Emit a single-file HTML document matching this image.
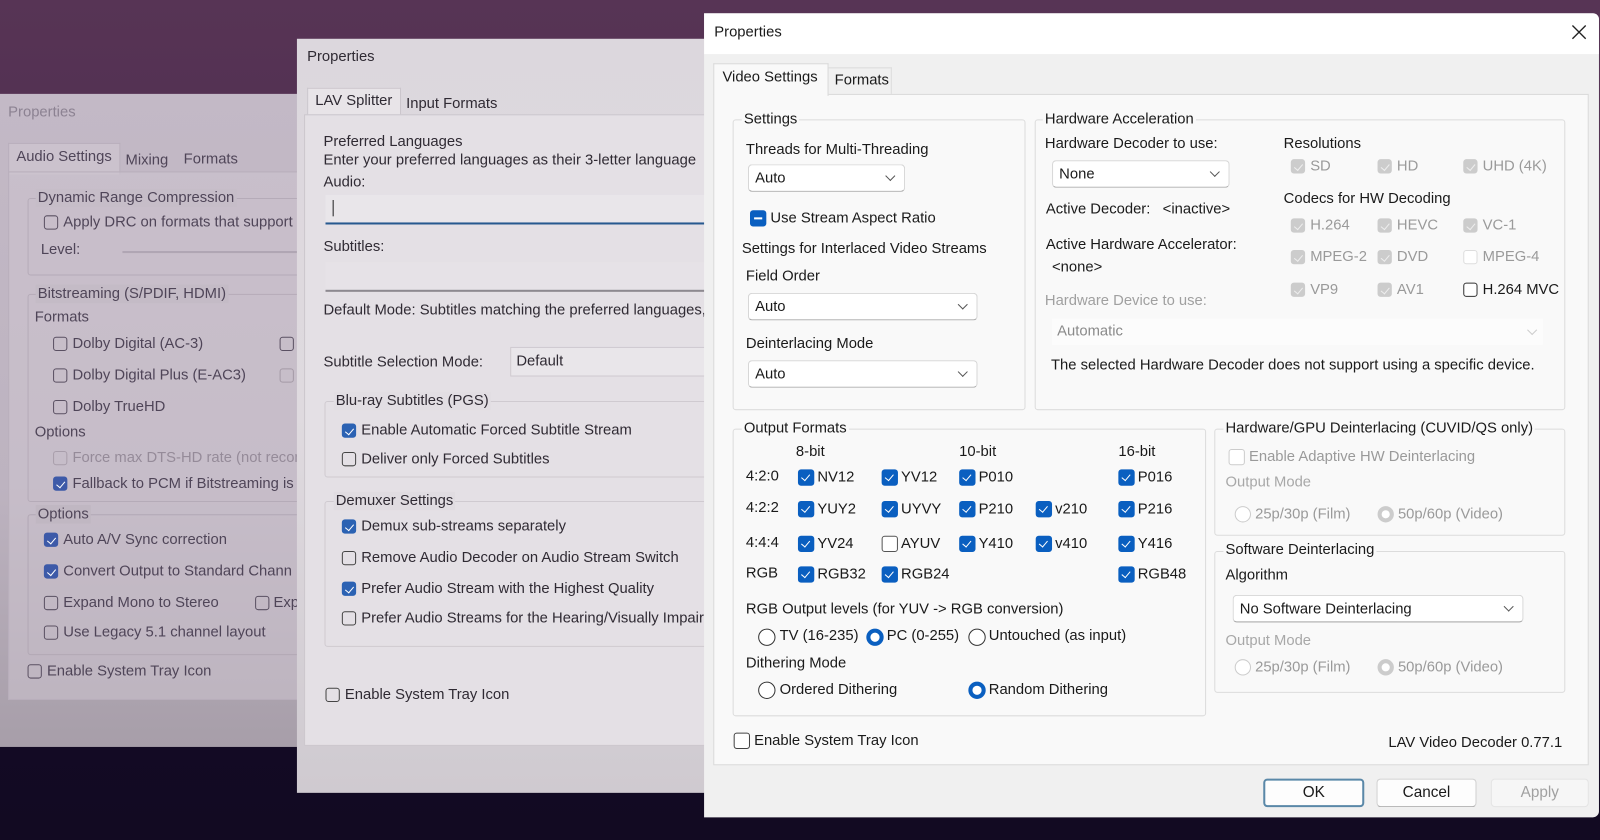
<!DOCTYPE html>
<html><head><meta charset="utf-8">
<style>
html,body{margin:0;padding:0;width:1600px;height:840px;overflow:hidden}
body{background:linear-gradient(180deg,#573455 0%,#4c2c4e 40%,#2a1838 70%,#130a24 88%,#120a22 100%);font-family:"Liberation Sans",sans-serif}
#s{position:absolute;left:0;top:0;width:1568px;height:823px;transform:scale(1.0204);transform-origin:0 0}
.d{position:absolute;overflow:hidden}
.t{position:absolute;white-space:nowrap;line-height:18px;font-size:14.5px}
.b{position:absolute;border:1px solid #dcdcdc;border-radius:3px}
.cb{position:absolute;width:14px;height:14px;border:1px solid #333;border-radius:3px;box-sizing:border-box;background:#fff}
.cb.on{background:#0a5fc0;border-color:#0a5fc0}
.cb.on::after{content:"";position:absolute;left:3.5px;top:1.5px;width:4px;height:7px;border:solid #fff;border-width:0 1.6px 1.6px 0;transform:rotate(40deg)}
.cb.dis{background:#ccc;border-color:#ccc}
.cb.dis::after{content:"";position:absolute;left:3.5px;top:1.5px;width:4px;height:7px;border:solid #eee;border-width:0 1.5px 1.5px 0;transform:rotate(40deg)}
.cb.dw{background:#fff;border-color:#ddd}
.rd{position:absolute;width:15px;height:15px;border:1px solid #333;border-radius:50%;box-sizing:border-box;background:#fff}
.rd.on{border:4.5px solid #0a5fc0}
.rd.dg{border-color:#ccc}
.rd.dgo{border:4.5px solid #ccc;background:#fff}
.sel{position:absolute;background:#fff;border:1px solid #d6d6d6;border-bottom-color:#a8a8a8;border-radius:4px;box-sizing:border-box}
.sel span{position:absolute;left:6px;top:4px;font-size:14.5px;line-height:18px}
.sel i{position:absolute;right:10px;top:7px;width:6px;height:6px;border:solid #555;border-width:0 1.3px 1.3px 0;transform:rotate(45deg)}
.g{color:#9a9a9a}
</style></head><body><div id="s">

<!-- LEFT DIALOG -->
<div class="d" style="left:0;top:92px;width:292px;height:640px;background:linear-gradient(180deg,#c3b9c6 0%,#bdb3c0 60%,#a79ea9 100%);color:#4f4558">
 <div class="t" style="left:8px;top:9px;color:#8c8292">Properties</div>
 <div style="position:absolute;left:8px;top:48px;width:108px;height:30px;background:#cbc2cd;border:1px solid #b8aebb;border-bottom:none"></div>
 <div class="t" style="left:16px;top:53px">Audio Settings</div>
 <div class="t" style="left:123px;top:56px">Mixing</div>
 <div class="t" style="left:180px;top:55px">Formats</div>
 <div style="position:absolute;left:8px;top:76px;width:290px;height:516px;background:rgba(205,196,207,.55);border:1px solid #b8aebb"></div>
 <div class="b" style="left:27px;top:102px;width:280px;height:74px;border-color:#b5abb8"></div>
 <div class="t" style="left:35px;top:93px;background:#c6bdc8;padding:0 2px">Dynamic Range Compression</div>
 <i class="cb" style="left:43px;top:119px;background:transparent;border-color:#5a5062"></i><div class="t" style="left:62px;top:117px">Apply DRC on formats that support</div>
 <div class="t" style="left:40px;top:144px">Level:</div>
 <div style="position:absolute;left:120px;top:154px;width:180px;height:2px;background:#b0a6b3"></div>
 <div class="b" style="left:27px;top:196px;width:280px;height:202px;border-color:#b5abb8"></div>
 <div class="t" style="left:35px;top:187px;background:#c4bbc6;padding:0 2px">Bitstreaming (S/PDIF, HDMI)</div>
 <div class="t" style="left:34px;top:210px">Formats</div>
 <i class="cb" style="left:52px;top:238px;background:transparent;border-color:#5a5062"></i><div class="t" style="left:71px;top:236px">Dolby Digital (AC-3)</div>
 <i class="cb" style="left:274px;top:238px;background:transparent;border-color:#5a5062"></i>
 <i class="cb" style="left:52px;top:269px;background:transparent;border-color:#5a5062"></i><div class="t" style="left:71px;top:267px">Dolby Digital Plus (E-AC3)</div>
 <i class="cb" style="left:274px;top:269px;background:transparent;border-color:#a49aa6"></i>
 <i class="cb" style="left:52px;top:300px;background:transparent;border-color:#5a5062"></i><div class="t" style="left:71px;top:298px">Dolby TrueHD</div>
 <div class="t" style="left:34px;top:323px">Options</div>
 <i class="cb" style="left:52px;top:350px;background:transparent;border-color:#a89eab"></i><div class="t" style="left:71px;top:348px;color:#958b99">Force max DTS-HD rate (not recom</div>
 <i class="cb on" style="left:52px;top:375px;background:#3d5aa8;border-color:#3d5aa8"></i><div class="t" style="left:71px;top:373px">Fallback to PCM if Bitstreaming is r</div>
 <div class="b" style="left:27px;top:412px;width:280px;height:136px;border-color:#b2a8b5"></div>
 <div class="t" style="left:35px;top:403px;background:#c0b7c2;padding:0 2px">Options</div>
 <i class="cb on" style="left:43px;top:430px;background:#3d5aa8;border-color:#3d5aa8"></i><div class="t" style="left:62px;top:428px">Auto A/V Sync correction</div>
 <i class="cb on" style="left:43px;top:461px;background:#3d5aa8;border-color:#3d5aa8"></i><div class="t" style="left:62px;top:459px">Convert Output to Standard Chann</div>
 <i class="cb" style="left:43px;top:492px;background:transparent;border-color:#5a5062"></i><div class="t" style="left:62px;top:490px">Expand Mono to Stereo</div>
 <i class="cb" style="left:250px;top:492px;background:transparent;border-color:#5a5062"></i><div class="t" style="left:268px;top:490px">Exp</div>
 <i class="cb" style="left:43px;top:521px;background:transparent;border-color:#5a5062"></i><div class="t" style="left:62px;top:519px">Use Legacy 5.1 channel layout</div>
 <i class="cb" style="left:27px;top:559px;background:transparent;border-color:#5a5062"></i><div class="t" style="left:46px;top:557px">Enable System Tray Icon</div>
</div>

<!-- MIDDLE DIALOG -->
<div class="d" style="left:291px;top:38px;width:400px;height:739px;background:linear-gradient(180deg,#dcd7dd 0%,#dfdadf 50%,#cfcad0 100%);color:#2f2a33">
 <div class="t" style="left:10px;top:9px">Properties</div>
 <div style="position:absolute;left:10px;top:48px;width:90px;height:28px;background:#e8e4e8;border:1px solid #cbc6cc;border-bottom:none"></div>
 <div class="t" style="left:18px;top:52px">LAV Splitter</div>
 <div class="t" style="left:107px;top:55px">Input Formats</div>
 <div style="position:absolute;left:7px;top:74px;width:400px;height:617px;background:#e4e0e5;border:1px solid #cbc6cc"></div>
 <div class="t" style="left:26px;top:92px">Preferred Languages</div>
 <div class="t" style="left:26px;top:110px">Enter your preferred languages as their 3-letter language</div>
 <div class="t" style="left:26px;top:132px">Audio:</div>
 <div style="position:absolute;left:28px;top:153px;width:380px;height:27px;background:#e9e6ea;border-bottom:2px solid #27598f"></div>
 <div style="position:absolute;left:35px;top:158px;width:1px;height:16px;background:#222"></div>
 <div class="t" style="left:26px;top:195px">Subtitles:</div>
 <div style="position:absolute;left:28px;top:219px;width:380px;height:27px;background:#e6e2e7;border-bottom:2px solid #8d8990"></div>
 <div class="t" style="left:26px;top:257px">Default Mode: Subtitles matching the preferred languages,</div>
 <div class="t" style="left:26px;top:308px">Subtitle Selection Mode:</div>
 <div style="position:absolute;left:209px;top:302px;width:200px;height:27px;background:#e9e6ea;border:1px solid #cfcad0"></div>
 <div class="t" style="left:215px;top:307px">Default</div>
 <div class="b" style="left:27px;top:355px;width:380px;height:73px;border-color:#cfcad0"></div>
 <div class="t" style="left:36px;top:346px;background:#e2dee3;padding:0 2px">Blu-ray Subtitles (PGS)</div>
 <i class="cb on" style="left:44px;top:377px;background:#2b62b3;border-color:#2b62b3"></i><div class="t" style="left:63px;top:375px">Enable Automatic Forced Subtitle Stream</div>
 <i class="cb" style="left:44px;top:405px;background:transparent;border-color:#444"></i><div class="t" style="left:63px;top:403px">Deliver only Forced Subtitles</div>
 <div class="b" style="left:27px;top:453px;width:380px;height:141px;border-color:#cfcad0"></div>
 <div class="t" style="left:36px;top:444px;background:#e0dce1;padding:0 2px">Demuxer Settings</div>
 <i class="cb on" style="left:44px;top:471px;background:#2b62b3;border-color:#2b62b3"></i><div class="t" style="left:63px;top:469px">Demux sub-streams separately</div>
 <i class="cb" style="left:44px;top:502px;background:transparent;border-color:#444"></i><div class="t" style="left:63px;top:500px">Remove Audio Decoder on Audio Stream Switch</div>
 <i class="cb on" style="left:44px;top:532px;background:#2b62b3;border-color:#2b62b3"></i><div class="t" style="left:63px;top:530px">Prefer Audio Stream with the Highest Quality</div>
 <i class="cb" style="left:44px;top:561px;background:transparent;border-color:#444"></i><div class="t" style="left:63px;top:559px">Prefer Audio Streams for the Hearing/Visually Impaired</div>
 <i class="cb" style="left:28px;top:636px;background:transparent;border-color:#444"></i><div class="t" style="left:47px;top:634px">Enable System Tray Icon</div>
</div>

<!-- RIGHT DIALOG -->
<div class="d" style="left:690px;top:13px;width:877px;height:788px;background:#f0f0f0;color:#1a1a1a;border-radius:0 6px 6px 0">
 <div style="position:absolute;left:0;top:0;width:877px;height:40px;background:#fff"></div>
 <div class="t" style="left:10px;top:10px">Properties</div>
 <svg style="position:absolute;left:850px;top:11px" width="15" height="15"><path d="M1 1L14 14M14 1L1 14" stroke="#222" stroke-width="1.3"/></svg>
 <div style="position:absolute;left:9px;top:49px;width:111px;height:31px;background:#f9f9f9;border:1px solid #d9d9d9;border-bottom:none;z-index:2"></div>
 <div class="t" style="left:18px;top:54px;z-index:3">Video Settings</div>
 <div style="position:absolute;left:121px;top:53px;width:61px;height:26px;border:1px solid #dcdcdc;border-bottom:none;background:#f0f0f0"></div>
 <div class="t" style="left:128px;top:57px">Formats</div>
 <div style="position:absolute;left:9px;top:79px;width:858px;height:658px;background:#f9f9f9;border:1px solid #d9d9d9;box-sizing:border-box"></div>

 <div class="b" style="left:28px;top:104px;width:285px;height:283px"></div>
 <div class="t" style="left:37px;top:95px;background:#f9f9f9;padding:0 2px">Settings</div>
 <div class="t" style="left:41px;top:125px">Threads for Multi-Threading</div>
 <div class="sel" style="left:43px;top:148px;width:154px;height:27px"><span>Auto</span><i></i></div>
 <i class="cb" style="left:45px;top:193px;width:16px;height:16px;background:#0a5fc0;border-color:#0a5fc0"></i>
 <div style="position:absolute;left:49px;top:200px;width:8px;height:2px;background:#fff"></div>
 <div class="t" style="left:65px;top:192px">Use Stream Aspect Ratio</div>
 <div class="t" style="left:37px;top:222px">Settings for Interlaced Video Streams</div>
 <div class="t" style="left:41px;top:249px">Field Order</div>
 <div class="sel" style="left:43px;top:274px;width:225px;height:27px"><span>Auto</span><i></i></div>
 <div class="t" style="left:41px;top:315px">Deinterlacing Mode</div>
 <div class="sel" style="left:43px;top:340px;width:225px;height:27px"><span>Auto</span><i></i></div>

 <div class="b" style="left:324px;top:104px;width:518px;height:283px"></div>
 <div class="t" style="left:332px;top:95px;background:#f9f9f9;padding:0 2px">Hardware Acceleration</div>
 <div class="t" style="left:334px;top:119px">Hardware Decoder to use:</div>
 <div class="sel" style="left:341px;top:144px;width:174px;height:27px"><span>None</span><i></i></div>
 <div class="t" style="left:335px;top:183px">Active Decoder:&nbsp;&nbsp; &lt;inactive&gt;</div>
 <div class="t" style="left:335px;top:218px">Active Hardware Accelerator:</div>
 <div class="t" style="left:341px;top:240px">&lt;none&gt;</div>
 <div class="t g" style="left:334px;top:273px;color:#a0a0a0">Hardware Device to use:</div>
 <div style="position:absolute;left:341px;top:299px;width:481px;height:26px;background:#fcfcfc"></div>
 <div class="t" style="left:346px;top:303px;color:#8a8a8a">Automatic</div>
 <div style="position:absolute;left:808px;top:307px;width:6px;height:6px;border:solid #ccc;border-width:0 1.3px 1.3px 0;transform:rotate(45deg)"></div>
 <div class="t" style="left:340px;top:336px">The selected Hardware Decoder does not support using a specific device.</div>
 <div class="t" style="left:568px;top:119px">Resolutions</div>
 <i class="cb dis" style="left:575px;top:143px"></i><div class="t g" style="left:594px;top:141px">SD</div>
 <i class="cb dis" style="left:660px;top:143px"></i><div class="t g" style="left:679px;top:141px">HD</div>
 <i class="cb dis" style="left:744px;top:143px"></i><div class="t g" style="left:763px;top:141px">UHD (4K)</div>
 <div class="t" style="left:568px;top:173px">Codecs for HW Decoding</div>
 <i class="cb dis" style="left:575px;top:201px"></i><div class="t g" style="left:594px;top:199px">H.264</div>
 <i class="cb dis" style="left:660px;top:201px"></i><div class="t g" style="left:679px;top:199px">HEVC</div>
 <i class="cb dis" style="left:744px;top:201px"></i><div class="t g" style="left:763px;top:199px">VC-1</div>
 <i class="cb dis" style="left:575px;top:232px"></i><div class="t g" style="left:594px;top:230px">MPEG-2</div>
 <i class="cb dis" style="left:660px;top:232px"></i><div class="t g" style="left:679px;top:230px">DVD</div>
 <i class="cb dw" style="left:744px;top:232px"></i><div class="t g" style="left:763px;top:230px">MPEG-4</div>
 <i class="cb dis" style="left:575px;top:264px"></i><div class="t g" style="left:594px;top:262px">VP9</div>
 <i class="cb dis" style="left:660px;top:264px"></i><div class="t g" style="left:679px;top:262px">AV1</div>
 <i class="cb" style="left:744px;top:264px"></i><div class="t" style="left:763px;top:262px">H.264 MVC</div>

 <div class="b" style="left:28px;top:407px;width:462px;height:280px"></div>
 <div class="t" style="left:37px;top:398px;background:#f9f9f9;padding:0 2px">Output Formats</div>
 <div class="t" style="left:90px;top:421px">8-bit</div>
 <div class="t" style="left:250px;top:421px">10-bit</div>
 <div class="t" style="left:406px;top:421px">16-bit</div>
 <div class="t" style="left:41px;top:445px">4:2:0</div>
 <div class="t" style="left:41px;top:476px">4:2:2</div>
 <div class="t" style="left:41px;top:510px">4:4:4</div>
 <div class="t" style="left:41px;top:540px">RGB</div>
 <i class="cb on" style="left:92px;top:447px;width:16px;height:16px"></i><div class="t" style="left:111px;top:446px">NV12</div>
 <i class="cb on" style="left:174px;top:447px;width:16px;height:16px"></i><div class="t" style="left:193px;top:446px">YV12</div>
 <i class="cb on" style="left:250px;top:447px;width:16px;height:16px"></i><div class="t" style="left:269px;top:446px">P010</div>
 <i class="cb on" style="left:406px;top:447px;width:16px;height:16px"></i><div class="t" style="left:425px;top:446px">P016</div>
 <i class="cb on" style="left:92px;top:478px;width:16px;height:16px"></i><div class="t" style="left:111px;top:477px">YUY2</div>
 <i class="cb on" style="left:174px;top:478px;width:16px;height:16px"></i><div class="t" style="left:193px;top:477px">UYVY</div>
 <i class="cb on" style="left:250px;top:478px;width:16px;height:16px"></i><div class="t" style="left:269px;top:477px">P210</div>
 <i class="cb on" style="left:325px;top:478px;width:16px;height:16px"></i><div class="t" style="left:344px;top:477px">v210</div>
 <i class="cb on" style="left:406px;top:478px;width:16px;height:16px"></i><div class="t" style="left:425px;top:477px">P216</div>
 <i class="cb on" style="left:92px;top:512px;width:16px;height:16px"></i><div class="t" style="left:111px;top:511px">YV24</div>
 <i class="cb" style="left:174px;top:512px;width:16px;height:16px;border-color:#555"></i><div class="t" style="left:193px;top:511px">AYUV</div>
 <i class="cb on" style="left:250px;top:512px;width:16px;height:16px"></i><div class="t" style="left:269px;top:511px">Y410</div>
 <i class="cb on" style="left:325px;top:512px;width:16px;height:16px"></i><div class="t" style="left:344px;top:511px">v410</div>
 <i class="cb on" style="left:406px;top:512px;width:16px;height:16px"></i><div class="t" style="left:425px;top:511px">Y416</div>
 <i class="cb on" style="left:92px;top:542px;width:16px;height:16px"></i><div class="t" style="left:111px;top:541px">RGB32</div>
 <i class="cb on" style="left:174px;top:542px;width:16px;height:16px"></i><div class="t" style="left:193px;top:541px">RGB24</div>
 <i class="cb on" style="left:406px;top:542px;width:16px;height:16px"></i><div class="t" style="left:425px;top:541px">RGB48</div>
 <div class="t" style="left:41px;top:575px">RGB Output levels (for YUV -&gt; RGB conversion)</div>
 <i class="rd" style="left:53px;top:603px;width:17px;height:17px"></i><div class="t" style="left:74px;top:601px">TV (16-235)</div>
 <i class="rd on" style="left:159px;top:603px;width:17px;height:17px"></i><div class="t" style="left:179px;top:601px">PC (0-255)</div>
 <i class="rd" style="left:259px;top:603px;width:17px;height:17px"></i><div class="t" style="left:279px;top:601px">Untouched (as input)</div>
 <div class="t" style="left:41px;top:628px">Dithering Mode</div>
 <i class="rd" style="left:53px;top:655px;width:17px;height:17px"></i><div class="t" style="left:74px;top:654px">Ordered Dithering</div>
 <i class="rd on" style="left:259px;top:655px;width:17px;height:17px"></i><div class="t" style="left:279px;top:654px">Random Dithering</div>

 <div class="b" style="left:500px;top:407px;width:342px;height:103px"></div>
 <div class="t" style="left:509px;top:398px;background:#f9f9f9;padding:0 2px">Hardware/GPU Deinterlacing (CUVID/QS only)</div>
 <i class="cb" style="left:514px;top:427px;width:16px;height:16px;border-color:#ccc"></i><div class="t g" style="left:534px;top:426px">Enable Adaptive HW Deinterlacing</div>
 <div class="t" style="left:511px;top:451px;color:#a8a8a8">Output Mode</div>
 <i class="rd dg" style="left:520px;top:483px;width:16px;height:16px"></i><div class="t g" style="left:540px;top:482px">25p/30p (Film)</div>
 <i class="rd dgo" style="left:660px;top:483px;width:16px;height:16px"></i><div class="t g" style="left:680px;top:482px">50p/60p (Video)</div>
 <div class="b" style="left:500px;top:527px;width:342px;height:137px"></div>
 <div class="t" style="left:509px;top:517px;background:#f9f9f9;padding:0 2px">Software Deinterlacing</div>
 <div class="t" style="left:511px;top:542px">Algorithm</div>
 <div class="sel" style="left:518px;top:570px;width:285px;height:27px"><span>No Software Deinterlacing</span><i></i></div>
 <div class="t" style="left:511px;top:606px;color:#a8a8a8">Output Mode</div>
 <i class="rd dg" style="left:520px;top:633px;width:16px;height:16px"></i><div class="t g" style="left:540px;top:632px">25p/30p (Film)</div>
 <i class="rd dgo" style="left:660px;top:633px;width:16px;height:16px"></i><div class="t g" style="left:680px;top:632px">50p/60p (Video)</div>

 <i class="cb" style="left:29px;top:705px;width:16px;height:16px;border-color:#444"></i><div class="t" style="left:49px;top:704px">Enable System Tray Icon</div>
 <div class="t" style="right:36px;top:706px">LAV Video Decoder 0.77.1</div>

 <div style="position:absolute;left:548px;top:750px;width:99px;height:28px;background:#fdfdfd;border:2px solid #5a88a8;border-radius:4px;box-sizing:border-box;text-align:center;line-height:24px;font-size:15px">OK</div>
 <div style="position:absolute;left:659px;top:750px;width:98px;height:28px;background:#fdfdfd;border:1px solid #d0d0d0;border-bottom-color:#b0b0b0;border-radius:4px;box-sizing:border-box;text-align:center;line-height:26px;font-size:15px">Cancel</div>
 <div style="position:absolute;left:771px;top:750px;width:96px;height:28px;background:#f6f6f6;border:1px solid #e4e4e4;border-radius:4px;box-sizing:border-box;text-align:center;line-height:26px;font-size:15px;color:#a0a0a0">Apply</div>
</div>

</div></body></html>
